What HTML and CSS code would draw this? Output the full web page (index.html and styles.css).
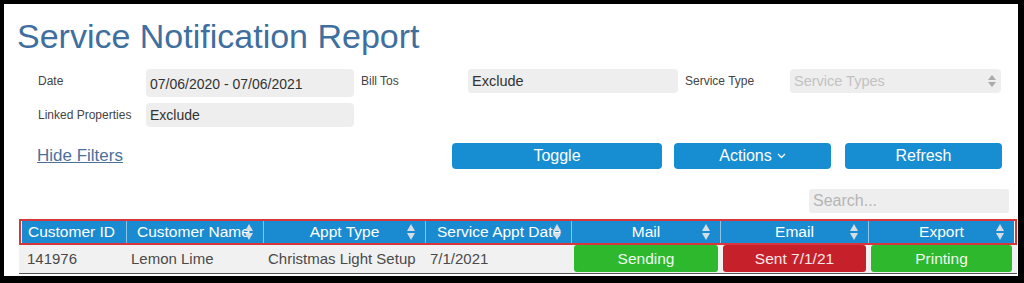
FILE: index.html
```html
<!DOCTYPE html>
<html lang="en">
<head>
  <meta charset="UTF-8">
  <meta name="viewport" content="width=device-width, initial-scale=1.0">
  <title>Service Notification Report</title>
  <link rel="stylesheet" href="styles.css">
</head>
<body>
  <main class="panel">
    <h1 class="title">Service Notification Report</h1>

    <div class="filters">
      <span class="flabel">Date</span>
      <div class="field tall">07/06/2020 - 07/06/2021</div>
      <span class="flabel lead">Bill Tos</span>
      <div class="field short">Exclude</div>
      <span class="flabel lead">Service Type</span>
      <div class="field short select">
        <span class="placeholder">Service Types</span>
        <svg class="spin" width="10" height="16" viewBox="0 0 10 16">
          <path d="M5 2 L9 7 L1 7 Z" fill="#a9a9a9"/>
          <path d="M5 14 L9 9 L1 9 Z" fill="#a9a9a9"/>
        </svg>
      </div>
      <span class="flabel">Linked Properties</span>
      <div class="field">Exclude</div>
    </div>

    <div class="toolbar">
      <a class="hide-link" href="#">Hide Filters</a>
      <div class="buttons">
        <button class="btn btn-toggle">Toggle</button>
        <button class="btn btn-actions">Actions
          <svg width="9" height="6" viewBox="0 0 9 6"><polyline points="1,1 4.5,4.5 8,1" fill="none" stroke="#fff" stroke-width="1.3"/></svg>
        </button>
        <button class="btn btn-refresh">Refresh</button>
      </div>
    </div>

    <div class="search-row">
      <div class="search">Search...</div>
    </div>

    <div class="report">
      <div class="thead">
        <div class="th th-id">Customer ID</div>
        <div class="th th-name">Customer Name<span class="sort"></span></div>
        <div class="th th-center">Appt Type<span class="sort"></span></div>
        <div class="th th-date">Service Appt Date<span class="sort"></span></div>
        <div class="th th-center">Mail<span class="sort"></span></div>
        <div class="th th-center">Email<span class="sort"></span></div>
        <div class="th th-center">Export<span class="sort"></span></div>
      </div>
      <div class="trow">
        <div class="td">141976</div>
        <div class="td">Lemon Lime</div>
        <div class="td">Christmas Light Setup</div>
        <div class="td">7/1/2021</div>
        <div class="td status ok">Sending</div>
        <div class="td status bad">Sent 7/1/21</div>
        <div class="td status ok">Printing</div>
      </div>
    </div>
  </main>
</body>
</html>
```

FILE: styles.css
```css
/* reset */
*,
*::before,
*::after {
  box-sizing: border-box;
}
body {
  margin: 0;
  background: #000;
  font-family: "Liberation Sans", Arial, sans-serif;
  color: #333;
}
/* panel */
.panel {
  background: #fff;
  margin: 4px 6px 7px 4px;
  height: 272px;
  padding: 0 2px 0 15px;
  overflow: hidden;
}
.title {
  margin: 12px 0 0 -2px;
  font-size: 34px;
  line-height: 40px;
  font-weight: normal;
  color: #3f6f9f;
}
/* filters */
.filters {
  display: grid;
  grid-template-columns: 108px 208px 114px 210px 112px 211px;
  grid-template-rows: 28px 24px;
  row-gap: 6px;
  margin: 13px 0 0 19px;
}
.flabel {
  font-size: 12px;
  line-height: 14px;
  padding-top: 5px;
  color: #444;
}
.flabel.lead {
  padding-left: 7px;
}
.field {
  display: flex;
  align-items: center;
  background: #eeeeee;
  border-radius: 4px;
  padding: 0 4px;
  font-size: 14px;
  color: #333;
}
.field.tall {
  padding-top: 2px;
}
.field.short {
  height: 24px;
  font-size: 14.5px;
}
.select {
  justify-content: space-between;
}
.placeholder {
  color: #c2c2c2;
}
/* toolbar */
.toolbar {
  display: flex;
  align-items: center;
  margin: 16px 14px 0 18px;
  height: 26px;
}
.hide-link {
  font-size: 17px;
  color: #4b7198;
  text-decoration: underline;
}
.buttons {
  display: flex;
  margin-left: auto;
}
.btn {
  height: 26px;
  border: none;
  border-radius: 4px;
  background: #178dd2;
  color: #fff;
  font-family: inherit;
  font-size: 16px;
  padding: 0;
  display: flex;
  align-items: center;
  justify-content: center;
  gap: 5px;
}
.btn-toggle {
  width: 210px;
}
.btn-actions {
  width: 157px;
  margin-left: 12px;
}
.btn-refresh {
  width: 157px;
  margin-left: 14px;
}
/* search */
.search-row {
  display: flex;
  justify-content: flex-end;
  margin: 20px 7px 0 0;
}
.search {
  width: 200px;
  height: 24px;
  background: #eeeeee;
  border-radius: 3px;
  color: #b5b5b5;
  font-size: 16px;
  line-height: 24px;
  padding-left: 4px;
}
/* table */
.report {
  margin-top: 6px;
  width: 998px;
}
.thead,
.trow {
  display: grid;
  grid-template-columns: 104px 137px 162px 146px 149px 148px 146px;
}
.thead {
  border: 2px solid #d7363d;
  padding: 0 1px;
  height: 26px;
}
.th {
  position: relative;
  background: #1a8bd0;
  color: #fff;
  font-size: 15.5px;
  line-height: 22px;
  white-space: nowrap;
  overflow: hidden;
  border-left: 1px solid #8cc4e8;
}
.th-id {
  border-left: none;
  padding-left: 6px;
}
.th-name {
  padding-left: 10px;
}
.th-date {
  padding-left: 11px;
}
.th-center {
  text-align: center;
}
.sort {
  position: absolute;
  right: 9px;
  top: 3px;
  width: 9px;
  height: 16px;
}
.sort::before,
.sort::after {
  content: "";
  position: absolute;
  left: 0;
  border-left: 4.5px solid transparent;
  border-right: 4.5px solid transparent;
}
.sort::before {
  top: 0;
  border-bottom: 7px solid #d6dde4;
}
.sort::after {
  bottom: 0;
  border-top: 7px solid #d6dde4;
}
.trow {
  height: 29px;
  padding: 0 3px;
  background: #f1f1f1;
  border-bottom: 1px solid #555;
}
.td {
  font-size: 15px;
  line-height: 28px;
  color: #4a4a4a;
  padding-left: 5px;
  white-space: nowrap;
}
.status {
  margin: 0 2px 1px 3px;
  padding: 0;
  border-radius: 3px;
  text-align: center;
  color: #f2fbf2;
  font-size: 15.5px;
  line-height: 27px;
}
.status.ok {
  background: #2db82d;
}
.status.bad {
  background: #c6212a;
  color: #fbeaea;
}
```
